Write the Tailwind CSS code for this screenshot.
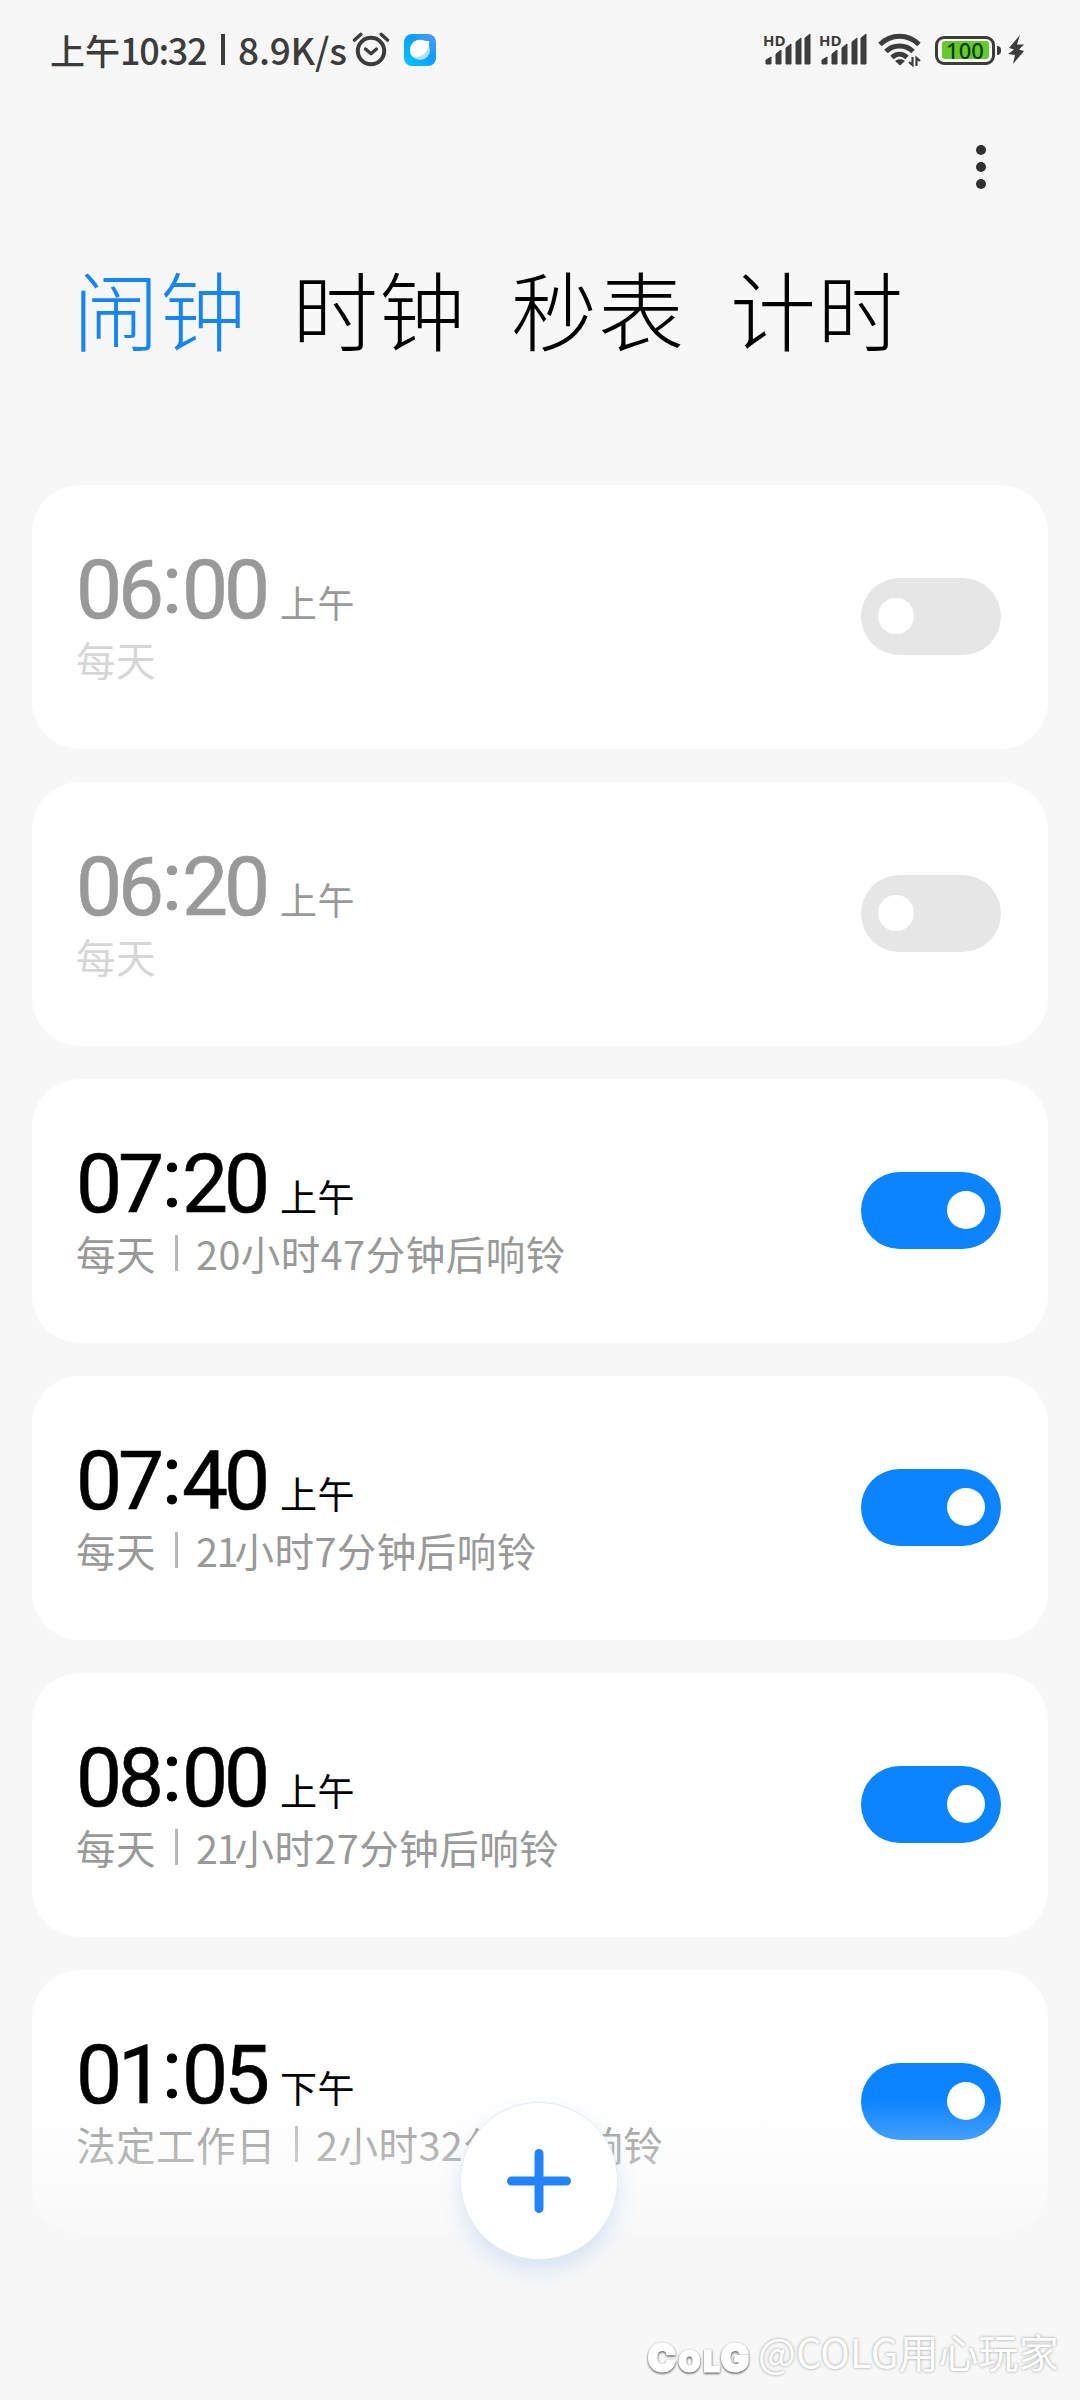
<!DOCTYPE html>
<html lang="zh-CN">
<head>
  <meta charset="UTF-8">
  <title>闹钟</title>
  <!-- Tailwind CSS -->
  <script src="https://cdn.jsdelivr.net/npm/@tailwindcss/browser@4"></script>
</head>
<body class="bg-[#f7f7f7]">
  <div class="relative w-[1080px] h-[2400px] overflow-hidden bg-[#f7f7f7] font-['Noto_Sans_CJK_SC',sans-serif]">

    <!-- Status bar -->
    <header class="flex items-center h-[100px] pl-[50px] pr-[55px] text-[#3c3c3c]">
      <div class="flex items-center w-[300px] pb-[2px] text-[35px] leading-none font-medium whitespace-nowrap">
        <span class="w-[70px]">上午</span>
        <span class="w-[102px] text-[36px] tracking-[-1.3px]">10:32</span>
        <span class="w-[4px] h-[31px] -ml-px mr-[13px] bg-[#3c3c3c]"></span>
        <span class="text-[37px] tracking-[-0.2px]">8.9K/s</span>
      </div>
      <svg class="w-[38px] h-[36px] ml-[2px] -mt-[2px]" viewBox="0 0 38 36" fill="none" stroke="#3c3c3c" stroke-width="4" stroke-linecap="round" stroke-linejoin="round">
        <circle cx="19" cy="20" r="13.2"/>
        <path d="M13.500 18l5.500 4.800 5.500-4.800" stroke-width="3.200"/>
        <path d="M2.500 9l6.200-5.500M35.500 9l-6.200-5.500" stroke-width="3.600"/>
      </svg>
      <svg class="w-[32px] h-[32px] ml-[14px]" viewBox="0 0 32 32">
        <defs>
          <linearGradient id="browser" x1="0" y1="1" x2="1" y2="0">
            <stop offset="0" stop-color="#00c8ff"/>
            <stop offset=".55" stop-color="#0c9fff"/>
            <stop offset="1" stop-color="#5a96ff"/>
          </linearGradient>
        </defs>
        <rect width="32" height="32" rx="8" fill="url(#browser)"/>
        <circle cx="16" cy="16" r="10" fill="#b4e0ff"/>
        <path d="M6 16C6 9 12 5 18 6c3 1 5 1 7 1 1 4-1 9-5 13-3 2-7 4-11 3-2-2-3-4-3-7z" fill="#fff"/>
      </svg>

      <div class="flex items-center ml-auto h-[40px]">
        <svg class="w-[48px] h-[34px] mr-[8px] overflow-visible" viewBox="0 0 48 34" fill="#3c3c3c">
          <text x="0" y="12.500" font-family="Open Sans" font-size="15" font-weight="700">HD</text>
          <path d="M3 27l5-3v7H3zM13 21l5-4v14h-5zM23 15l5-4v20h-5zM33 9l5-4v26h-5zM42 5l5-4v30h-5z" stroke="#3c3c3c" stroke-linejoin="round"/>
        </svg>
        <svg class="w-[48px] h-[34px] mr-[11px] overflow-visible" viewBox="0 0 48 34" fill="#3c3c3c">
          <text x="0" y="12.500" font-family="Open Sans" font-size="15" font-weight="700">HD</text>
          <path d="M3 27l5-3v7H3zM13 21l5-4v14h-5zM23 15l5-4v20h-5zM33 9l5-4v26h-5zM42 5l5-4v30h-5z" stroke="#3c3c3c" stroke-linejoin="round"/>
        </svg>
        <svg class="w-[44px] h-[34px] mr-[13px]" viewBox="0 0 44 34" fill="none" stroke="#3c3c3c" stroke-width="5">
          <path d="M2 11.500c11-11 28-11 39 0M8 18.500c7-7.500 20-7.500 27 0M14 24.500c4.500-4.500 10.500-4.500 15 0"/>
          <path d="M17 28c3-2.500 7-2.500 10 0l-5 4.500z" fill="#3c3c3c" stroke="none"/>
          <path d="M34.500 24v8l-3.500-3M38.500 33v-8l3.500 3" stroke-width="2.200"/>
        </svg>
        <div class="flex items-center justify-center w-[60px] h-[29px] border-[3px] border-[#3c3c3c] rounded-[9px]">
          <div class="flex items-center justify-center w-[47px] h-[18px] rounded-[3px] bg-[#65c92e] text-[#103c08] text-[22px] leading-none font-['Noto_Sans'] font-medium">100</div>
        </div>
        <div class="w-[4px] h-[9px] ml-[2px] rounded-r bg-[#3c3c3c]"></div>
        <svg class="w-[17px] h-[30px] ml-[7px]" viewBox="0 0 17 30" fill="#3c3c3c">
          <path d="M12 0L1 13l5 1.500L0 19l7 1-2 9 11-13-5-1.500 5-5H9z"/>
        </svg>
      </div>
    </header>

    <!-- Menu -->
    <div class="flex justify-end h-[130px] pt-[45px] pr-[94px]">
      <div class="flex flex-col gap-[7px]">
        <span class="size-[10px] rounded-full bg-[#303030]"></span>
        <span class="size-[10px] rounded-full bg-[#303030]"></span>
        <span class="size-[10px] rounded-full bg-[#303030]"></span>
      </div>
    </div>

    <!-- Tabs -->
    <nav class="flex h-[255px] pt-[13px] pl-[73px] text-[86px] leading-[130px] font-light tracking-[1px] text-black whitespace-nowrap">
      <span class="w-[219px] text-[#1584f8]">闹钟</span>
      <span class="w-[219px]">时钟</span>
      <span class="w-[219px]">秒表</span>
      <span>计时</span>
    </nav>

    <!-- Alarm cards -->
    <main id="alarms" class="flex flex-col gap-[33px] px-[32px]"></main>

    <!-- Fade at the bottom of the list -->
    <div class="absolute left-0 top-[2100px] w-full h-[170px] bg-linear-to-b from-[#f7f7f7]/0 to-[#f7f7f7]"></div>

    <!-- Add button -->
    <button class="absolute left-[460px] top-[2102px] size-[158px] rounded-full bg-white border border-[#e4ebf2] flex items-center justify-center shadow-[0_10px_22px_rgba(40,130,230,0.16)]">
      <svg class="size-[64px]" viewBox="0 0 64 64" stroke="#2483f6" stroke-width="9" stroke-linecap="round">
        <path d="M32 4.500v55M4.500 32h55"/>
      </svg>
    </button>

    <!-- Watermark -->
    <div class="absolute left-[648px] top-[2324px] flex items-center h-[60px] whitespace-nowrap text-white">
      <div class="flex items-baseline w-[110px] pt-[7px] font-[Inter] font-extrabold leading-none [-webkit-text-stroke:3px_white] [filter:drop-shadow(0_1px_1px_rgba(0,0,0,0.75))]">
        <span class="w-[31px] text-[37px]">C</span>
        <span class="w-[25px] text-[27px]">O</span>
        <span class="w-[17px] text-[27px]">L</span>
        <span class="text-[37px]">G</span>
      </div>
      <span class="pb-[6px] text-[40px] leading-none tracking-[0.1px] [text-shadow:0_0_3px_rgba(0,0,0,0.4)]">@COLG用心玩家</span>
    </div>
  </div>

  <script>
    var alarms = [
      { time: "06:00", half: "上午", repeat: "每天", left: "", on: false },
      { time: "06:20", half: "上午", repeat: "每天", left: "", on: false },
      { time: "07:20", half: "上午", repeat: "每天", left: "20小时47分钟后响铃", on: true },
      { time: "07:40", half: "上午", repeat: "每天", left: "21小时7分钟后响铃", on: true },
      { time: "08:00", half: "上午", repeat: "每天", left: "21小时27分钟后响铃", on: true },
      { time: "01:05", half: "下午", repeat: "法定工作日", left: "2小时32分钟后响铃", on: true }
    ];

    function createCard(alarm) {
      var parts = alarm.time.split(":");
      var color = alarm.on ? "text-black" : "text-[#999]";
      var noteColor = alarm.on ? "text-[#999]" : "text-[#d6d6d6]";
      var toggle = alarm.on
        ? `<div class="flex items-center justify-end w-[140px] h-[77px] mb-[2px] pr-[16px] rounded-full bg-[#0d84ff]"><span class="size-[38px] rounded-full bg-white"></span></div>`
        : `<div class="flex items-center w-[140px] h-[77px] mb-[2px] pl-[17px] rounded-full bg-[#e6e6e6]"><span class="size-[36px] rounded-full bg-white"></span></div>`;
      // the digit 1 is narrower than the others
      var left = alarm.left.replace("1", `<span class="-ml-[2px] tracking-[-4px]">1</span>`);
      if (left) {
        left = `<span class="w-[3px] h-[36px] ml-[19px] mr-[18px] bg-[#b8b8b8]"></span><span>${left}</span>`;
      }
      return `
        <section class="flex items-center justify-between h-[264px] pl-[44px] pr-[47px] rounded-[48px] bg-white">
          <div class="pt-[2px]">
            <div class="flex items-baseline h-[82px] leading-[82px] ${color}">
              <span class="w-[86px] font-[Roboto] text-[82px] tracking-[-4px] [-webkit-text-stroke:0.6px]">${parts[0]}</span>
              <span class="w-[20px] relative -top-[5px] font-[Roboto] text-[82px] [-webkit-text-stroke:1px]">:</span>
              <span class="w-[98px] font-[Roboto] text-[82px] tracking-[-4px] [-webkit-text-stroke:0.6px]">${parts[1]}</span>
              <span class="text-[37px] tracking-[0.5px]">${alarm.half}</span>
            </div>
            <div class="flex items-center h-[56px] text-[39.5px] leading-[56px] tracking-[0.5px] whitespace-nowrap ${noteColor}">
              <span>${alarm.repeat}</span>${left}
            </div>
          </div>
          ${toggle}
        </section>`;
    }

    document.getElementById("alarms").innerHTML = alarms.map(createCard).join("");
  </script>
</body>
</html>
